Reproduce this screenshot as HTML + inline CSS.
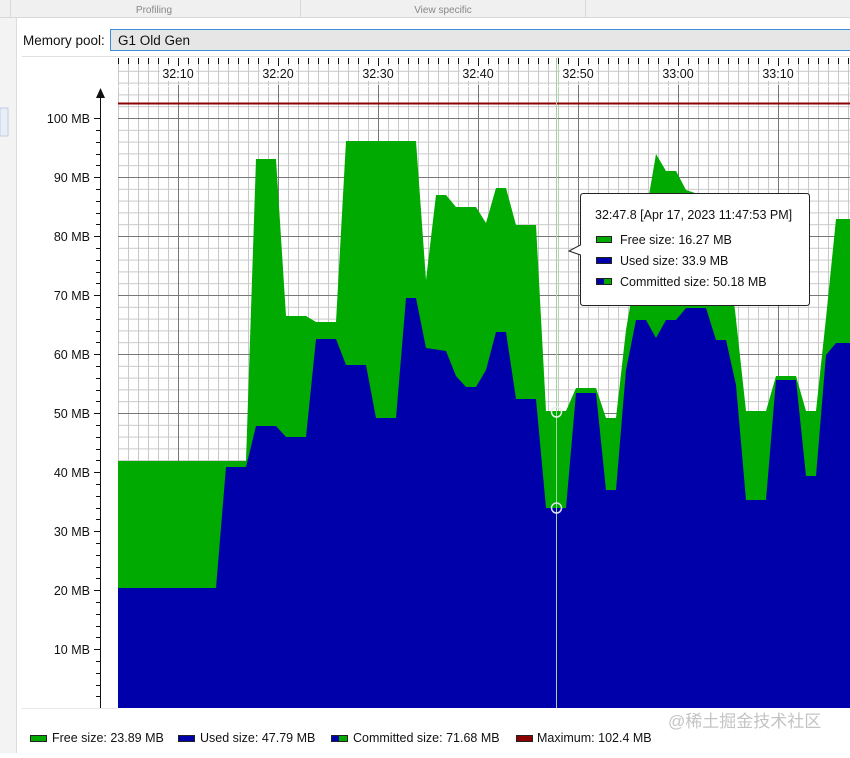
<!DOCTYPE html>
<html><head><meta charset="utf-8"><style>
body{margin:0;width:850px;height:753px;overflow:hidden;background:#fff;font-family:"Liberation Sans","Noto Sans CJK SC",sans-serif;}
</style></head><body>
<svg width="850" height="753" xmlns="http://www.w3.org/2000/svg" font-family="Liberation Sans, Noto Sans CJK SC, sans-serif">
<defs>
<pattern id="g" x="8" y="0" width="10" height="11.8" patternUnits="userSpaceOnUse">
<path d="M0.5 0V11.8M0 0.5H10" stroke="#c8c8c8" stroke-width="1" fill="none"/>
</pattern>
</defs>
<rect x="0" y="0" width="850" height="17" fill="#f0f0f0"/>
<line x1="0" y1="17.5" x2="850" y2="17.5" stroke="#d8d8d8"/>
<line x1="10.5" y1="0" x2="10.5" y2="17" stroke="#d8d8d8"/>
<line x1="300.5" y1="0" x2="300.5" y2="17" stroke="#d8d8d8"/>
<line x1="585.5" y1="0" x2="585.5" y2="17" stroke="#d8d8d8"/>
<text x="154" y="13" font-size="10" fill="#888" text-anchor="middle">Profiling</text>
<text x="443" y="13" font-size="10" fill="#888" text-anchor="middle">View specific</text>
<rect x="0" y="18" width="16" height="735" fill="#f3f3f3"/>
<line x1="16.5" y1="18" x2="16.5" y2="753" stroke="#dcdcdc"/>
<rect x="0" y="108" width="8" height="28" fill="#e8eef6" stroke="#c0cce0"/>
<text x="23" y="45" font-size="13.5" fill="#111">Memory pool:</text>
<rect x="110.5" y="29.5" width="745" height="21" fill="#e6e6e6" stroke="#3a8fd8"/>
<text x="118" y="45" font-size="13.5" fill="#111">G1 Old Gen</text>
<line x1="22" y1="56.5" x2="850" y2="56.5" stroke="#e0e0e0"/>
<rect x="118" y="58" width="732" height="650" fill="url(#g)"/>
<rect x="118" y="86" width="732" height="1" fill="#fff"/>
<g stroke="#777" stroke-width="1">
<line x1="178.5" y1="85" x2="178.5" y2="708"/><line x1="278.5" y1="85" x2="278.5" y2="708"/>
<line x1="378.5" y1="85" x2="378.5" y2="708"/><line x1="478.5" y1="85" x2="478.5" y2="708"/>
<line x1="578.5" y1="85" x2="578.5" y2="708"/><line x1="678.5" y1="85" x2="678.5" y2="708"/>
<line x1="778.5" y1="85" x2="778.5" y2="708"/>
<line x1="118" y1="118.5" x2="850" y2="118.5"/><line x1="118" y1="177.5" x2="850" y2="177.5"/>
<line x1="118" y1="236.5" x2="850" y2="236.5"/><line x1="118" y1="295.5" x2="850" y2="295.5"/>
<line x1="118" y1="354.5" x2="850" y2="354.5"/><line x1="118" y1="413.5" x2="850" y2="413.5"/>
<line x1="118" y1="472.5" x2="850" y2="472.5"/><line x1="118" y1="531.5" x2="850" y2="531.5"/>
<line x1="118" y1="590.5" x2="850" y2="590.5"/><line x1="118" y1="649.5" x2="850" y2="649.5"/>
</g>
<rect x="118" y="58" width="732" height="6" fill="#fff"/>
<g fill="#fff">
<rect x="160" y="66" width="36" height="15"/><rect x="260" y="66" width="36" height="15"/><rect x="360" y="66" width="36" height="15"/>
<rect x="460" y="66" width="36" height="15"/><rect x="560" y="66" width="36" height="15"/><rect x="660" y="66" width="36" height="15"/><rect x="760" y="66" width="36" height="15"/>
</g>
<g stroke="#111">
<path d="M118.5 58v6M128.5 58v6M138.5 58v6M148.5 58v6M158.5 58v6M168.5 58v6M188.5 58v6M198.5 58v6M208.5 58v6M218.5 58v6M228.5 58v6M238.5 58v6M248.5 58v6M258.5 58v6M268.5 58v6M288.5 58v6M298.5 58v6M308.5 58v6M318.5 58v6M328.5 58v6M338.5 58v6M348.5 58v6M358.5 58v6M368.5 58v6M388.5 58v6M398.5 58v6M408.5 58v6M418.5 58v6M428.5 58v6M438.5 58v6M448.5 58v6M458.5 58v6M468.5 58v6M488.5 58v6M498.5 58v6M508.5 58v6M518.5 58v6M528.5 58v6M538.5 58v6M548.5 58v6M558.5 58v6M568.5 58v6M588.5 58v6M598.5 58v6M608.5 58v6M618.5 58v6M628.5 58v6M638.5 58v6M648.5 58v6M658.5 58v6M668.5 58v6M688.5 58v6M698.5 58v6M708.5 58v6M718.5 58v6M728.5 58v6M738.5 58v6M748.5 58v6M758.5 58v6M768.5 58v6M788.5 58v6M798.5 58v6M808.5 58v6M818.5 58v6M828.5 58v6M838.5 58v6M848.5 58v6"/>
<path d="M178.5 58v8M278.5 58v8M378.5 58v8M478.5 58v8M578.5 58v8M678.5 58v8M778.5 58v8"/>
</g>
<g font-size="12.5" fill="#111" text-anchor="middle">
<text x="178" y="78">32:10</text><text x="278" y="78">32:20</text><text x="378" y="78">32:30</text>
<text x="478" y="78">32:40</text><text x="578" y="78">32:50</text><text x="678" y="78">33:00</text><text x="778" y="78">33:10</text>
</g>
<polygon fill="#00aa00" points="118,708 118,461 246,461 256,159 276,159 286,316 306,316 316,322 336,322 346,141 416,141 426,280 436,195 446,195 456,207 476,207 486,223 496,188 506,188 516,225 536,225 546,411 566,411 576,388 596,388 606,418 616,418 626,330 656,154 666,171 676,171 686,190 716,200 735,310 746,411 766,411 776,376 796,376 806,411 816,411 826,318 836,219 850,219 850,708"/>
<polygon fill="#0000aa" points="118,708 118,588 216,588 226,467 246,467 256,426 276,426 286,437 306,437 316,339 336,339 346,365 366,365 376,418 396,418 406,298 416,298 426,348 446,351 456,376 466,387 476,387 486,370 496,332 506,332 516,399 536,399 546,508 566,508 576,393 596,393 606,490 616,490 626,370 636,320 646,320 656,338 666,320 676,320 686,308 706,308 716,340 726,340 736,385 746,500 766,500 776,380 796,380 806,476 816,476 826,355 836,343 850,343 850,708"/>
<line x1="118" y1="103.5" x2="850" y2="103.5" stroke="#8b0000" stroke-width="2"/>
<line x1="556.5" y1="58" x2="556.5" y2="708" stroke="#9ad89a" stroke-width="1"/>
<circle cx="556.5" cy="412" r="5" fill="none" stroke="#e8f0e8" stroke-width="1.5"/>
<circle cx="556.5" cy="508" r="5" fill="none" stroke="#e0e0f0" stroke-width="1.5"/>
<line x1="100.5" y1="94" x2="100.5" y2="708" stroke="#111"/>
<polygon points="100.5,88 96,98 105,98" fill="#111"/>
<g stroke="#111">
<path d="M94 118.5h6M94 177.5h6M94 236.5h6M94 295.5h6M94 354.5h6M94 413.5h6M94 472.5h6M94 531.5h6M94 590.5h6M94 649.5h6"/>
<path d="M96 130.5h4M96 142.5h4M96 154.5h4M96 165.5h4M96 189.5h4M96 201.5h4M96 213.5h4M96 224.5h4M96 248.5h4M96 260.5h4M96 272.5h4M96 283.5h4M96 307.5h4M96 319.5h4M96 331.5h4M96 342.5h4M96 366.5h4M96 378.5h4M96 390.5h4M96 401.5h4M96 425.5h4M96 437.5h4M96 449.5h4M96 460.5h4M96 484.5h4M96 496.5h4M96 508.5h4M96 519.5h4M96 543.5h4M96 555.5h4M96 567.5h4M96 578.5h4M96 602.5h4M96 614.5h4M96 626.5h4M96 637.5h4M96 661.5h4M96 673.5h4M96 685.5h4M96 696.5h4"/>
</g>
<g font-size="12.5" fill="#111" text-anchor="end">
<text x="90" y="123">100 MB</text><text x="90" y="182">90 MB</text><text x="90" y="241">80 MB</text>
<text x="90" y="300">70 MB</text><text x="90" y="359">60 MB</text><text x="90" y="418">50 MB</text>
<text x="90" y="477">40 MB</text><text x="90" y="536">30 MB</text><text x="90" y="595">20 MB</text><text x="90" y="654">10 MB</text>
</g>
<line x1="22" y1="708.5" x2="118" y2="708.5" stroke="#e8e8e8"/>
<path d="M583.5 193.5H806.5Q809.5 193.5 809.5 196.5V302.5Q809.5 305.5 806.5 305.5H583.5Q580.5 305.5 580.5 302.5V255L569 251L580.5 245V196.5Q580.5 193.5 583.5 193.5Z" fill="#fff" stroke="#222"/>
<g font-size="12.5" fill="#111" xml:space="preserve">
<text x="595" y="219">32:47.8 [Apr 17, 2023 11:47:53 PM]</text>
<text x="620" y="244">Free size:  16.27 MB</text>
<text x="620" y="265">Used size:  33.9 MB</text>
<text x="620" y="286">Committed size:  50.18 MB</text>
</g>
<rect x="596.5" y="236.5" width="15" height="6" fill="#00aa00" stroke="#222"/>
<rect x="596.5" y="257.5" width="15" height="6" fill="#0000aa" stroke="#222"/>
<rect x="596.5" y="278.5" width="15" height="6" fill="#00aa00" stroke="#222"/>
<rect x="597" y="279" width="7" height="5" fill="#0000aa"/>
<g font-size="12.5" fill="#111">
<rect x="30.5" y="735.5" width="16" height="6" fill="#00aa00" stroke="#222"/>
<text x="52" y="742">Free size: 23.89 MB</text>
<rect x="178.5" y="735.5" width="16" height="6" fill="#0000aa" stroke="#222"/>
<text x="200" y="742">Used size: 47.79 MB</text>
<rect x="331.5" y="735.5" width="16" height="6" fill="#00aa00" stroke="#222"/>
<rect x="332" y="736" width="7" height="5" fill="#0000aa"/>
<text x="353" y="742">Committed size: 71.68 MB</text>
<rect x="516.5" y="735.5" width="16" height="6" fill="#8b0000" stroke="#222"/>
<text x="537" y="742">Maximum: 102.4 MB</text>
</g>
<text x="668" y="727" font-size="17" fill="#c4c4c4">@稀土掘金技术社区</text>
</svg>
</body></html>
